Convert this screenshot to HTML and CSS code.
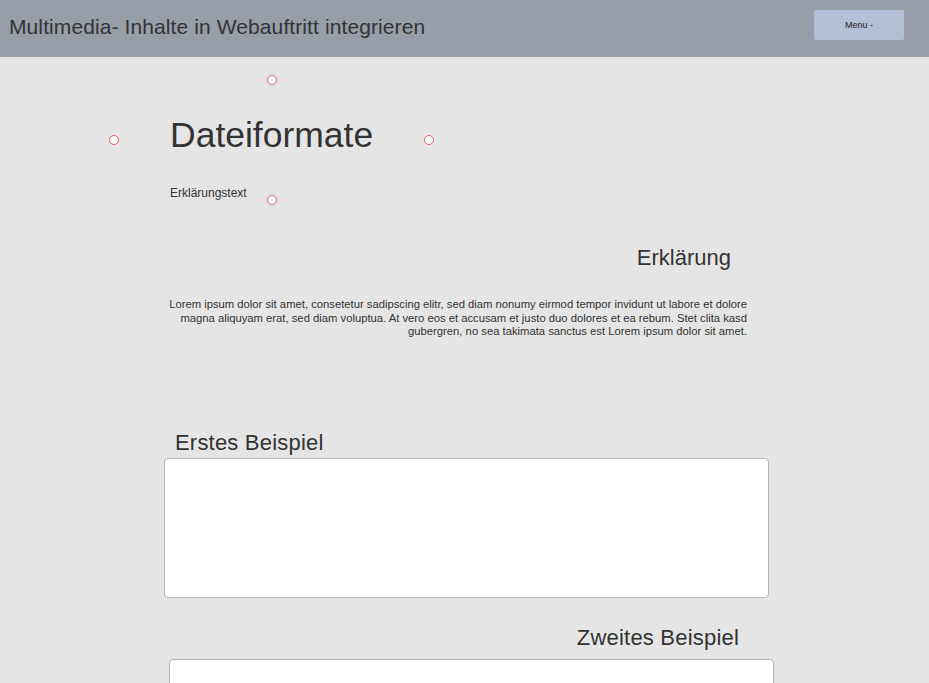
FILE: index.html
```html
<!DOCTYPE html>
<html lang="de">
<head>
<meta charset="utf-8">
<title>Multimedia- Inhalte in Webauftritt integrieren</title>
<link rel="stylesheet" href="styles.css">
</head>
<body>
<header class="topbar">
  <h1 class="site-title">Multimedia- Inhalte in Webauftritt integrieren</h1>
  <button class="menu-btn" type="button">Menu -</button>
</header>
<main class="page">
  <section class="hero">
    <span class="handle handle-top"></span>
    <span class="handle handle-left"></span>
    <span class="handle handle-right"></span>
    <span class="handle handle-bottom"></span>
    <h2 class="hero-title">Dateiformate</h2>
    <p class="hero-sub">Erklärungstext</p>
  </section>
  <section class="column">
    <h3 class="heading heading-explain">Erklärung</h3>
    <p class="lorem">Lorem ipsum dolor sit amet, consetetur sadipscing elitr, sed diam nonumy eirmod tempor invidunt ut labore et dolore magna aliquyam erat, sed diam voluptua. At vero eos et accusam et justo duo dolores et ea rebum. Stet clita kasd gubergren, no sea takimata sanctus est Lorem ipsum dolor sit amet.</p>
    <h3 class="heading heading-first">Erstes Beispiel</h3>
    <div class="example example-first"></div>
    <h3 class="heading heading-second">Zweites Beispiel</h3>
    <div class="example example-second"></div>
  </section>
</main>
</body>
</html>
```
FILE: styles.css
```css
* { box-sizing: border-box; }
html, body { margin: 0; padding: 0; }
body {
  background: #e5e5e5;
  font-family: "Liberation Sans", Arial, sans-serif;
  color: #333;
  overflow: hidden;
}
.topbar {
  height: 57px;
  background: #989ea8;
  display: flex;
  justify-content: space-between;
  align-items: flex-start;
  padding: 0 25px 0 9px;
}
.site-title {
  margin: 15px 0 0;
  font-size: 21px;
  line-height: 24px;
  font-weight: normal;
  color: #333;
  letter-spacing: 0.1px;
}
.menu-btn {
  margin-top: 10px;
  width: 90px;
  height: 30px;
  border: none;
  border-radius: 2px;
  background: #b4bed6;
  font-family: "Liberation Sans", Arial, sans-serif;
  font-size: 9px;
  color: #222;
  padding: 0;
}
.page { padding: 0; }
.hero {
  position: relative;
  width: 315px;
  height: 120px;
  margin: 23px 0 0 114px;
  padding: 35px 0 0 56px;
}
.handle {
  position: absolute;
  width: 10px;
  height: 10px;
  border: 1.5px solid #e4606b;
  background: #fff;
  border-radius: 50%;
  transform: translate(-50%, -50%);
}
.handle-top { left: 50%; top: 0; }
.handle-bottom { left: 50%; top: 100%; }
.handle-left { left: 0; top: 50%; }
.handle-right { left: 100%; top: 50%; }
.hero-title {
  margin: 0;
  font-size: 35.5px;
  line-height: 41px;
  font-weight: normal;
  color: #333;
}
.hero-sub {
  margin: 30px 0 0;
  font-size: 12px;
  line-height: 14px;
}
.column {
  margin-left: 164px;
  width: 610px;
  display: flex;
  flex-direction: column;
}
.heading {
  margin: 0;
  font-size: 22px;
  line-height: 25px;
  font-weight: normal;
  color: #333;
}
.heading-explain {
  margin-top: 45px;
  align-self: flex-end;
  margin-right: 43px;
}
.lorem {
  margin: 28px 27px 0 0;
  align-self: flex-end;
  width: 590px;
  text-align: right;
  font-size: 11.25px;
  line-height: 13.5px;
  color: #333;
}
.heading-first {
  margin-top: 91px;
  margin-left: 11px;
  align-self: flex-start;
  letter-spacing: 0.2px;
}
.example {
  width: 605px;
  height: 140px;
  background: #fff;
  border: 1px solid #b4b4b4;
  border-radius: 4px;
  flex-shrink: 0;
}
.example-first { margin-top: 3px; }
.heading-second {
  margin-top: 27px;
  align-self: flex-end;
  margin-right: 35px;
  letter-spacing: 0.2px;
}
.example-second {
  margin-top: 9px;
  margin-left: 5px;
}
```
